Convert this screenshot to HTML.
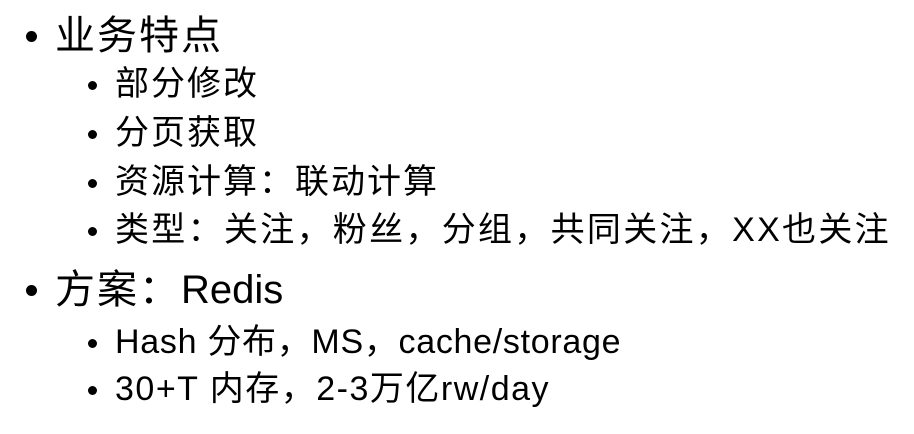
<!DOCTYPE html>
<html><head><meta charset="utf-8"><style>
body{margin:0;width:914px;height:434px;background:#fff;overflow:hidden;position:relative;font-family:"Liberation Sans","Noto Sans CJK SC",sans-serif;color:#000}
.l1,.l2{position:absolute;white-space:nowrap;line-height:1}
.l1{left:55px;font-size:40px;letter-spacing:2px}
.l2{left:115px;font-size:34px;letter-spacing:2px}
.b1,.b2{position:absolute;background:#000;border-radius:50%}
.b1{left:26px;width:11px;height:11px}
.b2{left:88px;width:9px;height:9px}
.n{letter-spacing:0}
</style></head><body>
<div class="b1" style="top:31px"></div><div class="l1" style="top:16px">业务特点</div>
<div class="b2" style="top:81px"></div><div class="l2" style="top:67px">部分修改</div>
<div class="b2" style="top:130px"></div><div class="l2" style="top:116px">分页获取</div>
<div class="b2" style="top:179px"></div><div class="l2" style="top:165px">资源计算：联动计算</div>
<div class="b2" style="top:227px"></div><div class="l2" style="top:213px;letter-spacing:2.3px">类型：关注，粉丝，分组，共同关注，XX也关注</div>
<div class="b1" style="top:285px"></div><div class="l1" style="top:270px">方案：<span class="n">Redis</span></div>
<div class="b2" style="top:339px"></div><div class="l2" style="top:325px;letter-spacing:0.7px">Hash 分布，MS，cache/storage</div>
<div class="b2" style="top:386px"></div><div class="l2" style="top:372px;letter-spacing:1.5px">30+T 内存，2-3万亿rw/day</div>
</body></html>
